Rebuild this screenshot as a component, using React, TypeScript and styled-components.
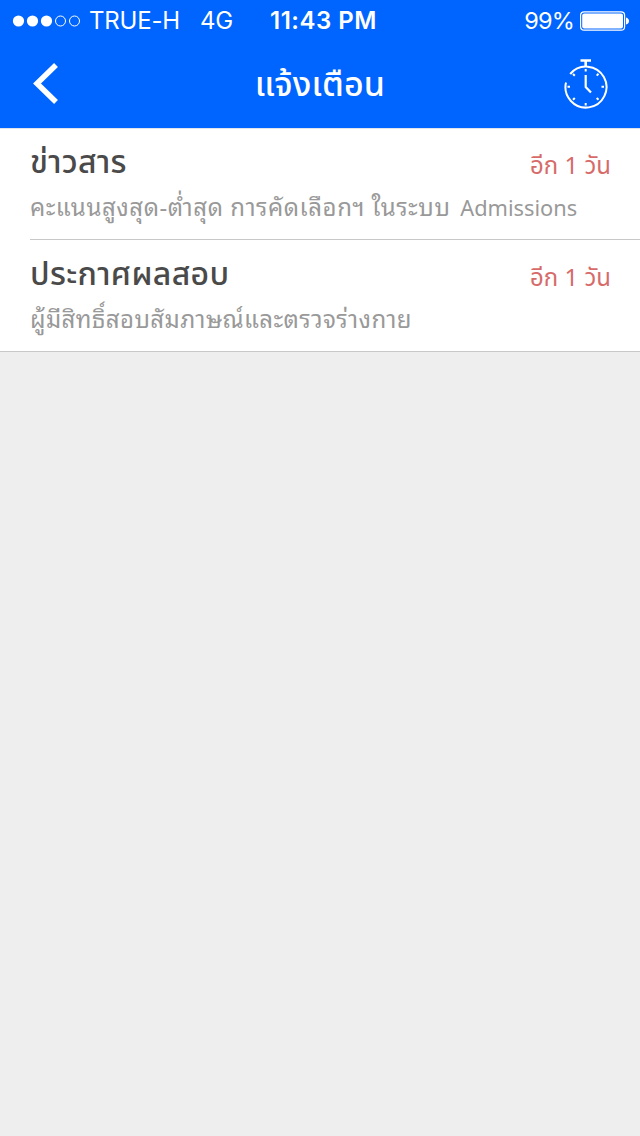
import React from 'react';
import styled, { createGlobalStyle } from 'styled-components';

const Global = createGlobalStyle`
  body { margin: 0; background: #eee; }
  * { box-sizing: border-box; }
`;
const thai = `"Noto Sans Thai", "Noto Sans", "Liberation Sans", sans-serif`;
const looped = `"Noto Sans Thai Looped", "Noto Looped Thai", "Loma", "Waree", "Garuda", "Noto Sans Thai", "Noto Sans", sans-serif`;

const Screen = styled.main`
  width: 640px; height: 1136px; overflow: hidden; background: #eee;
  font-family: ${thai}; white-space: nowrap;
`;
const Header = styled.header`height: 128px; background: #0064ff; color: #fff;`;
const StatusBar = styled.div`
  height: 40px; display: grid; grid-template-columns: 270px 1fr auto;
  align-items: center; padding: 1px 11px 0 12px;
  font: 400 24px/40px Inter, sans-serif;
`;
const Carrier = styled.div`display: flex; align-items: center; height: 40px;`;
const Label = styled.span<{ $w?: number; $gap?: number }>`
  display: block; margin-left: ${p => p.$gap ?? 0}px; width: ${p => p.$w ? p.$w + 'px' : 'auto'};
  letter-spacing: -0.2px;
`;
const Clock = styled.div`font-weight: 600; letter-spacing: 0.5px; margin-left: -12px;`;
const Power = styled.div`display: flex; align-items: center; gap: 6px; font-size: 23.5px; letter-spacing: -0.8px;`;
const Nav = styled.div`
  height: 88px; display: grid; grid-template-columns: 90px 1fr 108px; align-items: center;
`;
const IconButton = styled.button`
  border: 0; padding: 0; background: none; height: 88px; display: flex; align-items: center; justify-content: center;
`;
const Title = styled.h1`
  margin: 0; padding: 3px 0 0 18px; text-align: center; font-size: 34px; font-weight: 500; line-height: 85px;
  letter-spacing: 0.2px;
`;
const List = styled.ul`
  list-style: none; margin: 0; padding: 0 0 0 30px; background: #fff;
  border-top: 1px solid #e0e4ec; border-bottom: 1px solid #c8c8c8;
`;
const Item = styled.li`
  height: 110px; padding: 12px 29px 0 0;
  & + & { border-top: 1px solid #c8c8c8; height: 112px; padding-top: 13px; }
`;
const Row = styled.div`display: flex; justify-content: space-between; height: 45px;`;
const Heading = styled.h2`
  margin: 0; font-size: 32px; line-height: 45px; font-weight: 500; color: #4a4a4a; letter-spacing: 0.3px;
`;
const Due = styled.span`font-size: 24px; line-height: 53px; color: #d66b69; font-weight: 400;`;
const Detail = styled.p<{ $track: number }>`
  margin: 0; font-family: ${looped}; font-size: 24px; line-height: 38px; color: #999; font-weight: 400;
  letter-spacing: ${p => p.$track}px;
`;
const Latin = styled.span`font: 400 21.8px/30px "Noto Sans", sans-serif; letter-spacing: 0; margin-left: 3px;`;

const Signal = () => (
  <svg width="69" height="14" viewBox="0 0 69 14" fill="none" stroke="#fff">
    {[0, 1, 2, 3, 4].map(i => i < 3
      ? <circle key={i} cx={6.5 + i * 14} cy="7" r="5.6" fill="#fff" stroke="none" />
      : <circle key={i} cx={6.5 + i * 14} cy="7" r="5" />)}
  </svg>
);
const Battery = () => (
  <svg width="49" height="20" viewBox="0 0 49 20">
    <rect x=".6" y=".8" width="44" height="18.4" rx="3.5" fill="none" stroke="#fff" strokeWidth="1.2" />
    <rect x="2.2" y="2.4" width="40.8" height="15.2" rx="2" fill="#fff" />
    <path d="M46 6.5Q49 7.5 49 10T46 13.5Z" fill="#fff" />
  </svg>
);
const Back = () => (
  <svg width="28" height="44" viewBox="0 1 28 44" fill="none" stroke="#fff" strokeWidth="5.5">
    <path d="M25 4L6 22.5L25 41" />
  </svg>
);
const Stopwatch = () => (
  <svg width="46" height="54" viewBox="563 57 46 54" fill="none" stroke="#fff" strokeWidth="2">
    <path d="M580.5 60.5H591M585.7 60.5V66" strokeWidth="2.6" />
    <path d="M570.2 74A20.5 20.5 0 1 1 566 82.5" />
    <path d="M585.7 75V87L591 92.5" strokeWidth="2.2" />
    <path d="M585.7 69V71.5M585.7 103V105.5M567.5 86.8H570M601.5 86.8H604M573 74L574.8 75.8M598.5 73.8L596.7 75.6M573 99.8L574.8 98M598.5 99.8L596.7 98" />
  </svg>
);

const items = [
  { title: 'ข่าวสาร', detail: 'คะแนนสูงสุด-ต่ำสุด การคัดเลือกฯ ในระบบ ', latin: 'Admissions', due: 'อีก 1 วัน', track: 0.56 },
  { title: 'ประกาศผลสอบ', detail: 'ผู้มีสิทธิ์สอบสัมภาษณ์และตรวจร่างกาย', latin: '', due: 'อีก 1 วัน', track: 0.4 },
];

export default function App() {
  return (
    <>
      <Global />
      <Screen>
        <Header>
          <StatusBar>
            <Carrier><Signal /><Label $gap={8} $w={111}>TRUE-H</Label><Label>4G</Label></Carrier>
            <Clock>11:43 PM</Clock>
            <Power>99%<Battery /></Power>
          </StatusBar>
          <Nav>
            <IconButton aria-label="Back"><Back /></IconButton>
            <Title>แจ้งเตือน</Title>
            <IconButton aria-label="Timer"><Stopwatch /></IconButton>
          </Nav>
        </Header>
        <List>
          {items.map(it => (
            <Item key={it.title}>
              <Row><Heading>{it.title}</Heading><Due>{it.due}</Due></Row>
              <Detail $track={it.track}>{it.detail}{it.latin && <Latin>{it.latin}</Latin>}</Detail>
            </Item>
          ))}
        </List>
      </Screen>
    </>
  );
}
